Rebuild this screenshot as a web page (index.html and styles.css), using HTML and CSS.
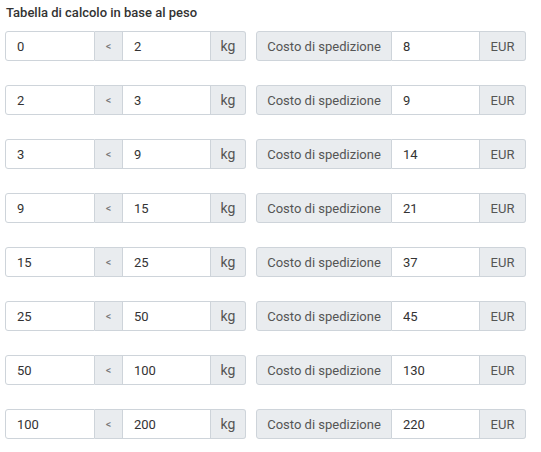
FILE: index.html
```html
<!DOCTYPE html>
<html lang="it">
<head>
    <meta charset="UTF-8">
    <meta name="viewport" content="width=device-width, initial-scale=1.0">
    <title>Tabella di calcolo in base al peso</title>
    <link rel="stylesheet" href="styles.css">
</head>
<body>
    <div class="container">
        <h3>Tabella di calcolo in base al peso</h3>
        <div id="rows"></div>
    </div>
    <script>
        let fasce = [
            { da: 0, a: 2, costo: 8 },
            { da: 2, a: 3, costo: 9 },
            { da: 3, a: 9, costo: 14 },
            { da: 9, a: 15, costo: 21 },
            { da: 15, a: 25, costo: 37 },
            { da: 25, a: 50, costo: 45 },
            { da: 50, a: 100, costo: 130 },
            { da: 100, a: 200, costo: 220 }
        ];
        let rows = document.getElementById("rows");
        fasce.forEach(f => {
            let row = document.createElement("div");
            row.className = "row";
            row.innerHTML = `
                <div class="input-group peso">
                    <input type="text" class="from" value="${f.da}">
                    <span class="addon lt">&lt;</span>
                    <input type="text" class="to" value="${f.a}">
                    <span class="addon kg">kg</span>
                </div>
                <div class="input-group costo">
                    <span class="addon label">Costo di spedizione</span>
                    <input type="text" class="price" value="${f.costo}">
                    <span class="addon eur">EUR</span>
                </div>`;
            rows.appendChild(row);
        });
    </script>
</body>
</html>
```

FILE: styles.css
```css
* { margin: 0; padding: 0; box-sizing: border-box; font-family: Roboto, Arial, sans-serif; }
body { background: #fff; color: #333; }
.container { padding: 5px 5px 0 5px; }
h3 { font-size: 13px; font-weight: 500; color: #333; line-height: 15px; margin: 0 0 11px 1px; }

/* Righe fasce di peso */
.row { display: flex; gap: 10px; height: 30px; margin-bottom: 24px; }
.input-group { display: flex; height: 30px; }
input, .addon { height: 30px; border: 1px solid #ced4da; font-size: 13px; color: #333; }
input { padding: 0 11px; background: #fff; outline: none; }
.addon { display: flex; align-items: center; justify-content: center; background: #e9ecef; color: #555; }
.input-group > * + * { border-left: none; }
.input-group > :first-child { border-radius: 3px 0 0 3px; }
.input-group > :last-child { border-radius: 0 3px 3px 0; }

.from { width: 90px; }
.lt { width: 28px; font-size: 11px; color: #777; }
.to { width: 88px; }
.kg { width: 35px; font-size: 14px; }
.label { width: 136px; }
.price { width: 88px; }
.eur { width: 46px; }
```
